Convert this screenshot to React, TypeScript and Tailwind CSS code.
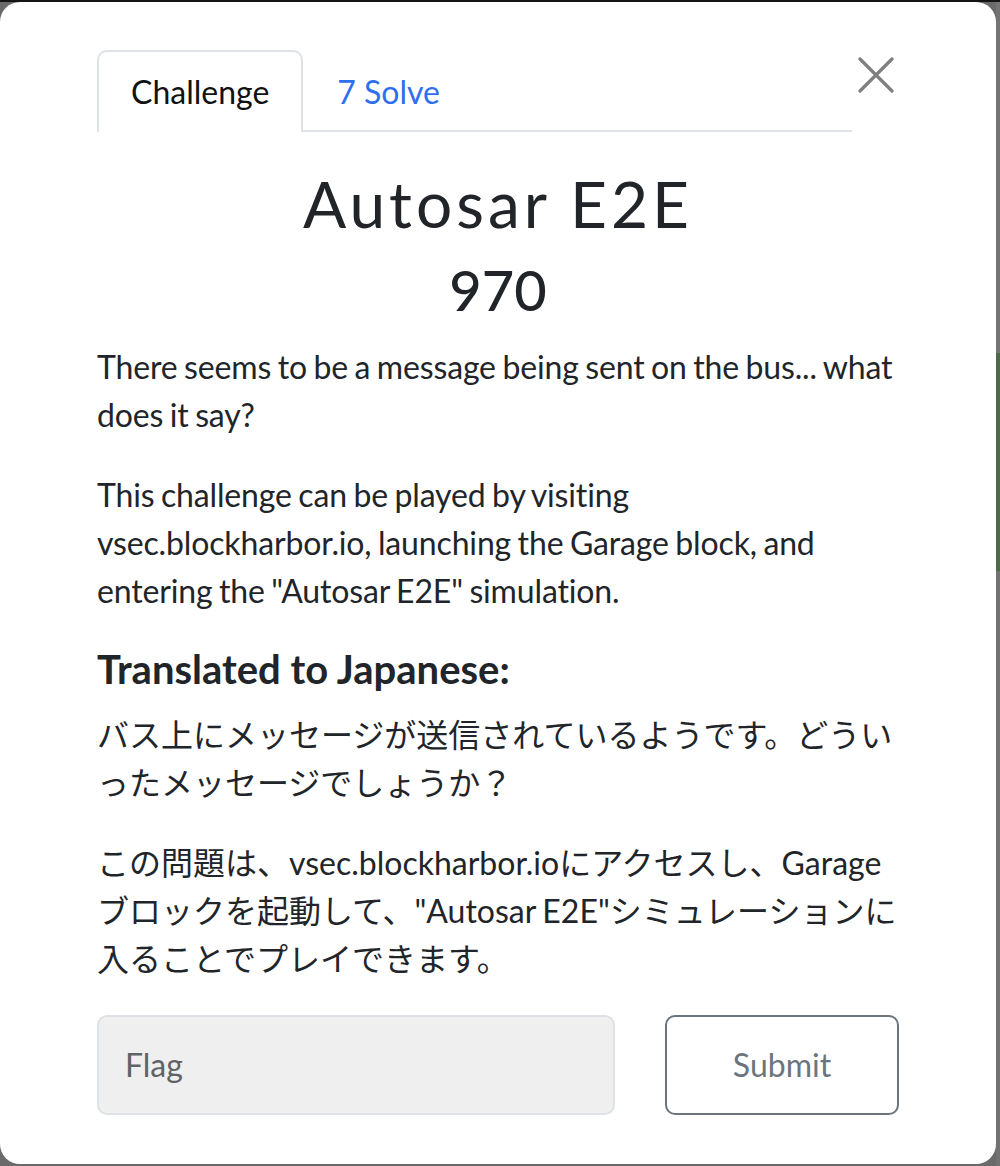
export default function App() {
  return (
    <div className="w-[1000px] h-[1166px] flex flex-col bg-[#6a6a6a] overflow-hidden" style={{ fontFamily: "Lato, 'Noto Sans CJK JP', sans-serif" }}>
      <div className="h-[2px] bg-[#141414]" />
      <div className="flex flex-1">
        <div className="w-[996px] h-[1162px] bg-white rounded-[20px] pt-[48px] px-[97px] text-[#212529]">
          {/* header: tabs + close */}
          <div className="flex items-start">
            <div className="flex w-[755px] border-b-2 border-[#dee2e6]">
              <div className="h-[82px] px-[32px] py-[16px] border-2 border-b-0 border-[#dee2e6] rounded-t-[10px] bg-white -mb-[2px] text-[32px] leading-[48px] text-[#111]">
                Challenge
              </div>
              <div className="h-[80px] px-[34px] pt-[18px] text-[32px] leading-[48px] text-[#2f6fed]">
                7 Solve
              </div>
            </div>
            <button className="mt-[7px] ml-[6px]">
              <svg width="36" height="36" viewBox="0 0 36 36">
                <path d="M2 2L34 34M34 2L2 34" stroke="#7f7f7f" strokeWidth="3.2" strokeLinecap="round" />
              </svg>
            </button>
          </div>

          <div className="text-center mt-[33px]">
            <h2 className="text-[64px] leading-[77px] tracking-[4px] font-normal">Autosar E2E</h2>
            <h3 className="text-[56px] leading-[68px] font-medium mt-[14px]">970</h3>
          </div>

          <div className="mt-[19px] text-[32px] leading-[48px] tracking-[-0.15px] [word-spacing:-1.5px]">
            <p className="mb-[32px]">There seems to be a message being sent on the bus... what does it say?</p>
            <p className="mb-[30px]">
              This challenge can be played by visiting vsec.blockharbor.io, launching the Garage block, and entering the "Autosar E2E" simulation.
            </p>
            <h4 className="text-[40px] leading-[48px] font-bold mb-[18px] tracking-normal [word-spacing:0px]">Translated to Japanese:</h4>
            <p className="mb-[32px] tracking-normal">バス上にメッセージが送信されているようです。どういったメッセージでしょうか？</p>
            <p className="mb-[32px] tracking-normal">
              この問題は、vsec.blockharbor.ioにアクセスし、Garageブロックを起動して、"Autosar E2E"シミュレーションに入ることでプレイできます。
            </p>
          </div>

          <div className="flex gap-[50px]">
            <div className="w-[518px] h-[100px] bg-[#efefef] border-2 border-[#dee2e6] rounded-[10px] px-[26px] flex items-center text-[32px] text-[#5f6368]">
              Flag
            </div>
            <button className="w-[234px] h-[100px] border-2 border-[#6c757d] rounded-[10px] text-[32px] text-[#6c757d]">
              Submit
            </button>
          </div>
        </div>
        <div className="flex-1 flex flex-col">
          <div className="h-[351px] bg-[#747474]" />
          <div className="h-[218px] bg-[#4d6a48]" />
          <div className="flex-1 bg-[#727272]" />
        </div>
      </div>
    </div>
  );
}
